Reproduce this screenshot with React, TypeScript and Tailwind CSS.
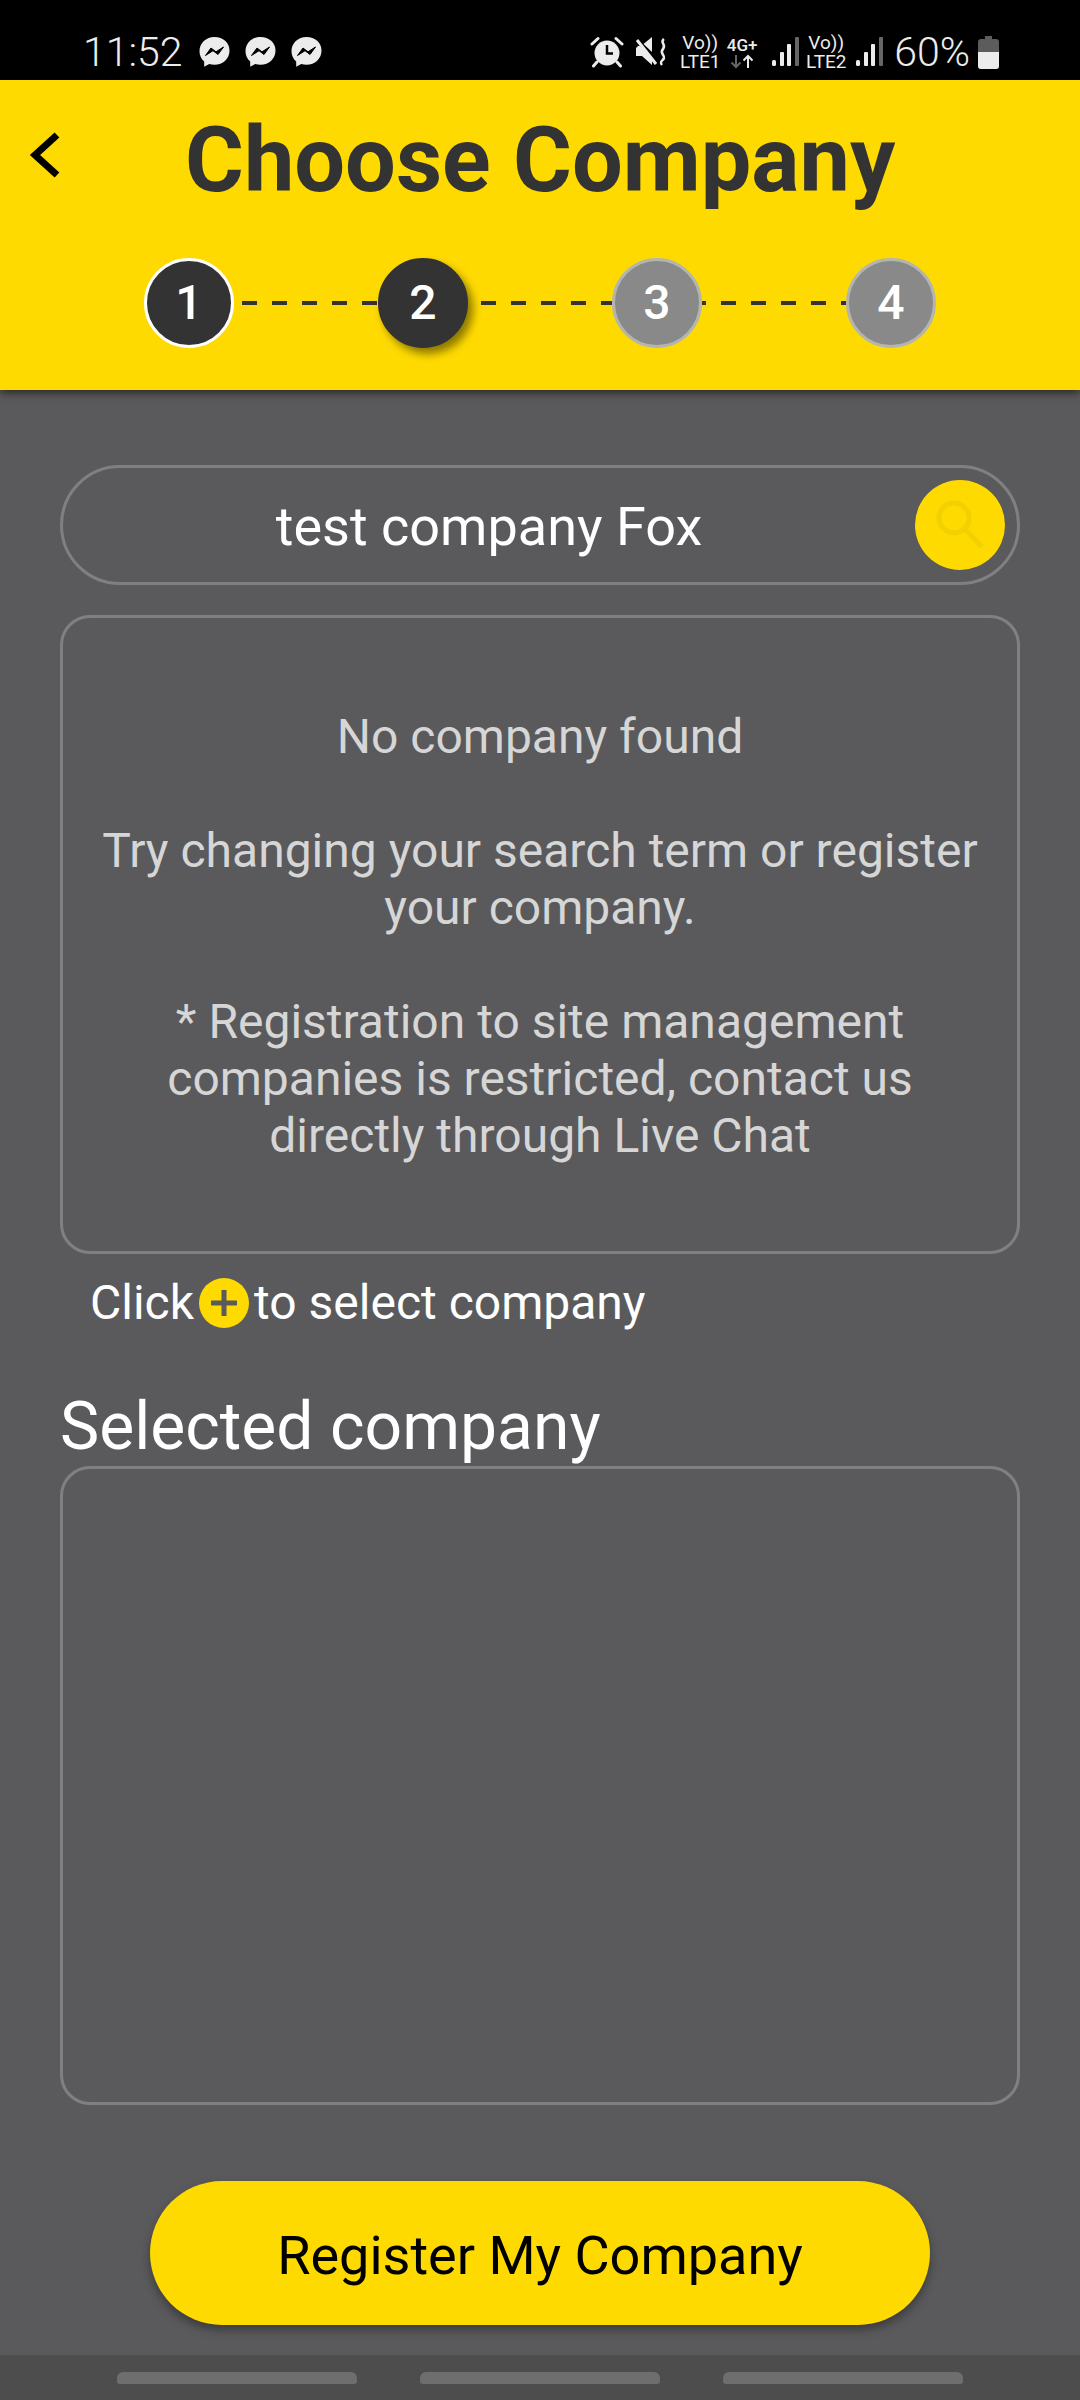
const steps = [
  { n: "1", cls: "bg-[#333333] border-white" },
  { n: "2", cls: "bg-[#333333] border-[#333333] shadow-[5px_6px_8px_rgba(0,0,0,0.45)]" },
  { n: "3", cls: "bg-[#898989] border-[#b5b5b0]" },
  { n: "4", cls: "bg-[#898989] border-[#b5b5b0]" },
];

const dashOffsets = ["bg-[position:8px_0]", "bg-[position:13px_0]", "bg-[position:19px_0]"];

function MessengerIcon() {
  return (
    <svg width="31" height="32" viewBox="0 0 31 32">
      <path d="M15.5 1C7 1 .5 7.2.5 15.2c0 4.2 1.8 7.8 4.7 10.3v5.3l5-2.7c1.6.5 3.4.7 5.3.7 8.5 0 15-6.200 15-14.300S24 1 15.500 1z" fill="#ececec" />
      <path d="M6.500 19.500l5.500-7.500 5 3.800 7.500-4.800-5.500 7.500-5-3.800z" fill="#000" stroke="#000" strokeWidth="1" />
    </svg>
  );
}

function AlarmIcon() {
  return (
    <svg width="34" height="32" viewBox="0 0 34 32" fill="none">
      <circle cx="17" cy="17" r="12.500" fill="#ececec" />
      <path d="M17 9v8.500h6" stroke="#000" strokeWidth="2.500" />
      <path d="M2 8l6-5.500M32 8l-6-5.500M7 26l-3.500 4M27 26l3.500 4" stroke="#ececec" strokeWidth="3" strokeLinecap="round" />
    </svg>
  );
}

function MuteIcon() {
  return (
    <svg width="34" height="32" viewBox="0 0 34 32" fill="none">
      <path d="M1 12v8h6l10 9v-6L5 10H3z" fill="#ececec" />
      <path d="M8.500 8L17 1v15z" fill="#ececec" />
      <path d="M2 4l19 24" stroke="#ececec" strokeWidth="3" />
      <path d="M29 3c-5 3 3 6-1 10s2 6 1 9-5 3-2 7" stroke="#ececec" strokeWidth="2.500" />
    </svg>
  );
}

function SignalIcon() {
  return (
    <svg width="28" height="32" viewBox="0 0 28 32">
      <rect x="1" y="24" width="4" height="6" rx="1.500" fill="#ececec" />
      <rect x="9" y="16" width="4" height="14" rx="1" fill="#ececec" />
      <rect x="16" y="8" width="4" height="22" rx="1" fill="#ececec" />
      <rect x="24" y="1" width="4" height="29" rx="1" fill="#666666" />
    </svg>
  );
}

function VoLte({ label }: { label: string }) {
  return (
    <div className="flex w-[44px] flex-col items-center text-[19px] leading-[19px] text-[#ececec]">
      <span>Vo))</span>
      <span>{label}</span>
    </div>
  );
}

function StatusBar() {
  return (
    <div className="flex h-[80px] items-center bg-black pt-[24px] pr-[81px] pl-[83px] text-[#ececec]">
      <span className="text-[41px] leading-none font-light">11:52</span>
      <div className="ml-[16px] flex gap-[15px]">
        <MessengerIcon />
        <MessengerIcon />
        <MessengerIcon />
      </div>
      <div className="ml-auto flex items-center">
        <AlarmIcon />
        <div className="ml-[11px]">
          <MuteIcon />
        </div>
        <div className="ml-[9px]">
          <VoLte label="LTE1" />
        </div>
        <div className="ml-[4px] flex w-[32px] flex-col items-center text-[17px] leading-[18px] font-medium">
          <span>4G+</span>
          <svg width="26" height="15" viewBox="0 0 26 15" fill="none" strokeWidth="2">
            <path d="M7 1v12M2.500 8.500L7 13l4.500-4.500" stroke="#666666" />
            <path d="M19 14V2M14.500 6.500L19 2l4.500 4.500" stroke="#ececec" />
          </svg>
        </div>
        <div className="ml-[13px]">
          <SignalIcon />
        </div>
        <div className="ml-[5px]">
          <VoLte label="LTE2" />
        </div>
        <div className="ml-[7px]">
          <SignalIcon />
        </div>
        <span className="ml-[11px] text-[41px] leading-none font-light">60%</span>
        <svg className="ml-[8px]" width="21" height="33" viewBox="0 0 21 33">
          <path d="M7 0h7v3h4a3 3 0 0 1 3 3v24a3 3 0 0 1-3 3H3a3 3 0 0 1-3-3V6a3 3 0 0 1 3-3h4z" fill="#5c5c5c" />
          <path d="M0 16h21v14a3 3 0 0 1-3 3H3a3 3 0 0 1-3-3z" fill="#ececec" />
        </svg>
      </div>
    </div>
  );
}

function Header() {
  return (
    <header className="relative z-10 flex h-[310px] flex-col bg-[#ffda00] shadow-[0_3px_8px_rgba(0,0,0,0.55)]">
      <div className="flex h-[178px] items-start">
        <svg className="mt-[50px] ml-[26px] shrink-0" width="36" height="50" viewBox="0 0 36 50" fill="none">
          <path d="M31 5L9 25l22 20" stroke="#000" strokeWidth="7" />
        </svg>
        <h1 className="mt-[29px] ml-[123px] text-[90px] leading-[104px] font-bold whitespace-nowrap text-[#333333]">
          Choose Company
        </h1>
      </div>
      <div className="ml-[144px] flex items-center">
        {steps.map((step, i) => (
          <div key={step.n} className="flex items-center">
            <div
              className={`flex h-[90px] w-[90px] shrink-0 items-center justify-center rounded-full border-[3px] text-[48px] font-medium text-white ${step.cls}`}
            >
              {step.n}
            </div>
            {i < 3 && (
              <div
                className={`h-[4px] w-[144px] bg-[linear-gradient(90deg,#333333_15px,transparent_15px)] bg-[length:30px_4px] ${dashOffsets[i]}`}
              />
            )}
          </div>
        ))}
      </div>
    </header>
  );
}

export default function App() {
  return (
    <div className="flex h-[2400px] w-[1080px] flex-col overflow-hidden bg-[#5a5a5c] font-['Roboto',sans-serif]">
      <StatusBar />
      <Header />

      <main className="flex flex-1 flex-col px-[60px] pt-[75px]">
        <div className="flex h-[120px] items-center rounded-full border-[3px] border-[#808082] pr-[12px]">
          <span className="mt-[4px] flex-1 text-center text-[54px] leading-none text-white">
            test company Fox
          </span>
          <div className="flex h-[90px] w-[90px] shrink-0 items-center justify-center rounded-full bg-[#ffda00]">
            <svg width="56" height="56" viewBox="0 0 56 56" fill="none" stroke="#f3d000" strokeWidth="5">
              <circle cx="22" cy="21" r="15" />
              <path d="M33 32l17 18" />
            </svg>
          </div>
        </div>

        <div className="mt-[30px] flex h-[639px] flex-col items-center rounded-[30px] border-[3px] border-[#808082] px-[30px] pt-[90px] text-center text-[48px] leading-[57px] text-[#d6d6d6]">
          <p>No company found</p>
          <p className="mt-[57px]">Try changing your search term or register your company.</p>
          <p className="mt-[57px] px-[60px]">
            * Registration to site management companies is restricted, contact us directly through Live Chat
          </p>
        </div>

        <div className="mt-[23px] ml-[30px] flex h-[52px] items-center text-[48px] leading-none text-white">
          <span>Click</span>
          <span className="mx-[5px] flex h-[50px] w-[50px] items-center justify-center rounded-full bg-[#ffda00]">
            <svg width="28" height="28" viewBox="0 0 28 28" stroke="#5a5a5c" strokeWidth="5">
              <path d="M14 1v26M1 14h26" />
            </svg>
          </span>
          <span>to select company</span>
        </div>

        <h2 className="mt-[57px] h-[80px] text-[66px] leading-[82px] text-white">Selected company</h2>

        <div className="h-[639px] rounded-[30px] border-[3px] border-[#808082]" />

        <button className="mx-auto mt-[76px] flex h-[144px] w-[780px] items-center justify-center rounded-full bg-[#ffda00] pt-[4px] text-[54px] text-black shadow-[0_5px_10px_rgba(0,0,0,0.35)]">
          Register My Company
        </button>
      </main>

      <nav className="flex h-[45px] justify-center gap-[63px] bg-[#4d4d4e] pt-[17px]">
        <div className="h-[12px] w-[240px] rounded-t-[6px] rounded-b-[3px] bg-[#6e6e6e]" />
        <div className="h-[12px] w-[240px] rounded-t-[6px] rounded-b-[3px] bg-[#6e6e6e]" />
        <div className="h-[12px] w-[240px] rounded-t-[6px] rounded-b-[3px] bg-[#6e6e6e]" />
      </nav>
    </div>
  );
}
